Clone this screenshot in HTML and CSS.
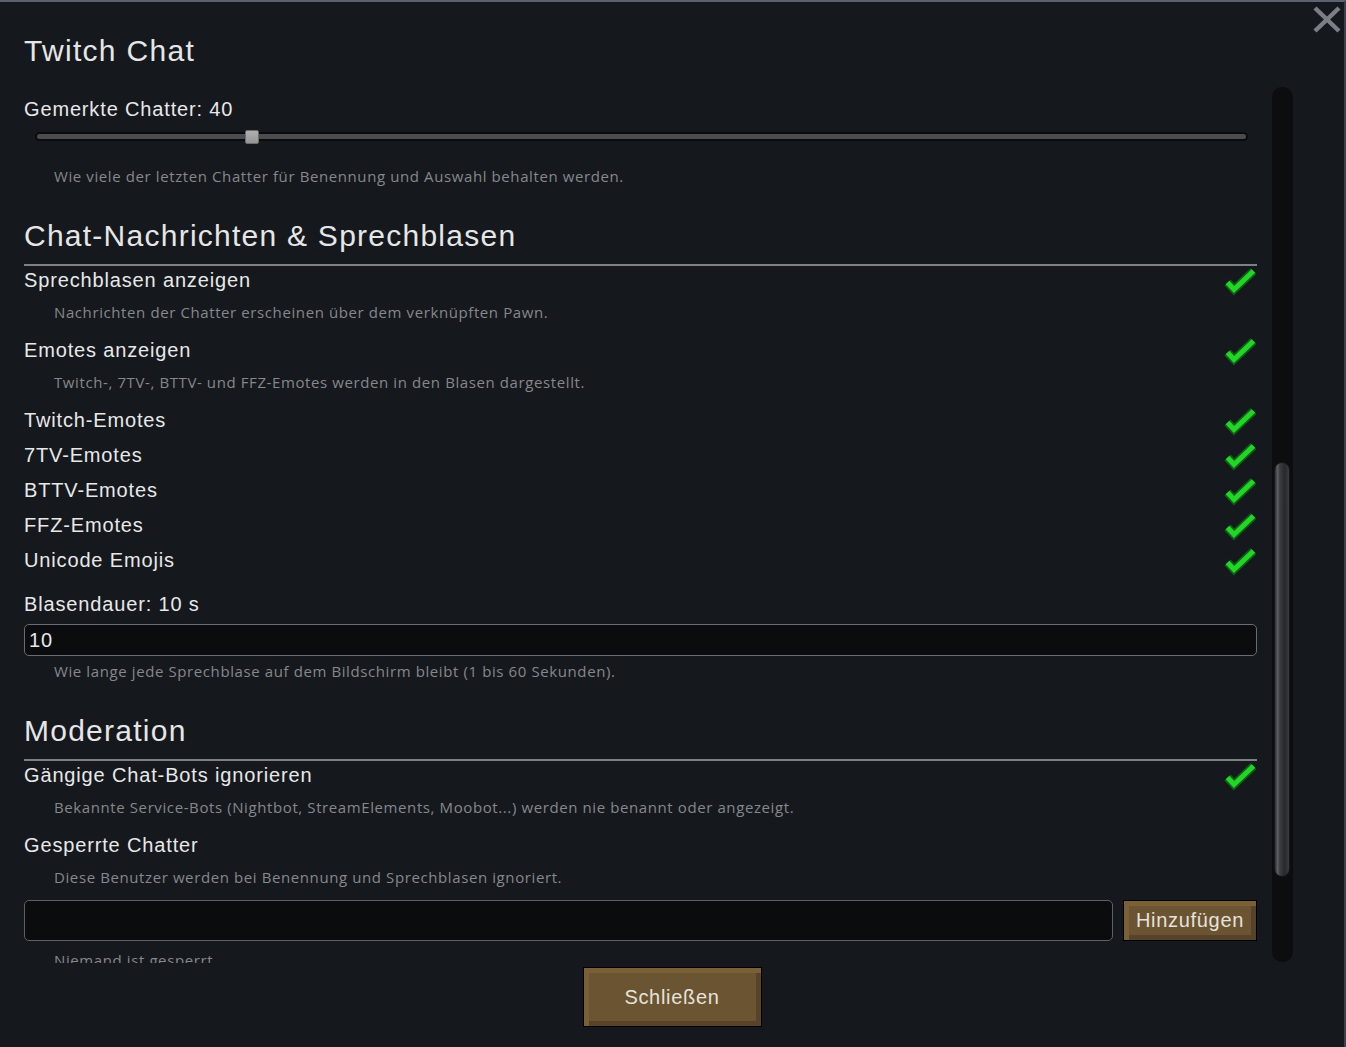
FILE: index.html
```html
<!DOCTYPE html>
<html lang="de">
<head>
<meta charset="utf-8">
<title>Twitch Chat</title>
<link rel="stylesheet" href="styles.css">
</head>
<body>
<div class="window">
  <button class="close-x" aria-label="Schließen">
    <svg width="28" height="27" viewBox="0 0 28 27"><path d="M2 2 L26 25 M26 2 L2 25" stroke="#7b7f85" stroke-width="4.5" fill="none"/></svg>
  </button>
  <h1 class="title">Twitch Chat</h1>
  <div class="main">
    <div class="viewport">
      <div class="content">
        <div class="label">Gemerkte Chatter: 40</div>
        <div class="slider">
          <div class="track"></div>
          <div class="thumb" style="left: calc(17.9% - 7px)"></div>
        </div>
        <div class="desc mt-19">Wie viele der letzten Chatter für Benennung und Auswahl behalten werden.</div>

        <h2 class="section-title">Chat-Nachrichten &amp; Sprechblasen</h2>
        <div class="rule"></div>
        <div class="toggle mt-2"><span class="label">Sprechblasen anzeigen</span><svg class="check" viewBox="0 0 34 30"><path class="ck-o" d="M4.5 15.5 L11 22.5 L30.5 4"/><path class="ck-i" d="M4.5 15.5 L11 22.5 L30.5 4"/></svg></div>
        <div class="desc mt-4">Nachrichten der Chatter erscheinen über dem verknüpften Pawn.</div>
        <div class="toggle mt-16"><span class="label">Emotes anzeigen</span><svg class="check" viewBox="0 0 34 30"><path class="ck-o" d="M4.5 15.5 L11 22.5 L30.5 4"/><path class="ck-i" d="M4.5 15.5 L11 22.5 L30.5 4"/></svg></div>
        <div class="desc mt-4">Twitch-, 7TV-, BTTV- und FFZ-Emotes werden in den Blasen dargestellt.</div>
        <div class="toggle mt-16"><span class="label">Twitch-Emotes</span><svg class="check" viewBox="0 0 34 30"><path class="ck-o" d="M4.5 15.5 L11 22.5 L30.5 4"/><path class="ck-i" d="M4.5 15.5 L11 22.5 L30.5 4"/></svg></div>
        <div class="toggle mt-5"><span class="label">7TV-Emotes</span><svg class="check" viewBox="0 0 34 30"><path class="ck-o" d="M4.5 15.5 L11 22.5 L30.5 4"/><path class="ck-i" d="M4.5 15.5 L11 22.5 L30.5 4"/></svg></div>
        <div class="toggle mt-5"><span class="label">BTTV-Emotes</span><svg class="check" viewBox="0 0 34 30"><path class="ck-o" d="M4.5 15.5 L11 22.5 L30.5 4"/><path class="ck-i" d="M4.5 15.5 L11 22.5 L30.5 4"/></svg></div>
        <div class="toggle mt-5"><span class="label">FFZ-Emotes</span><svg class="check" viewBox="0 0 34 30"><path class="ck-o" d="M4.5 15.5 L11 22.5 L30.5 4"/><path class="ck-i" d="M4.5 15.5 L11 22.5 L30.5 4"/></svg></div>
        <div class="toggle mt-5"><span class="label">Unicode Emojis</span><svg class="check" viewBox="0 0 34 30"><path class="ck-o" d="M4.5 15.5 L11 22.5 L30.5 4"/><path class="ck-i" d="M4.5 15.5 L11 22.5 L30.5 4"/></svg></div>
        <div class="label mt-14">Blasendauer: 10 s</div>
        <div class="text-input mt-8">10</div>
        <div class="desc mt-5">Wie lange jede Sprechblase auf dem Bildschirm bleibt (1 bis 60 Sekunden).</div>

        <h2 class="section-title">Moderation</h2>
        <div class="rule"></div>
        <div class="toggle mt-2"><span class="label">Gängige Chat-Bots ignorieren</span><svg class="check" viewBox="0 0 34 30"><path class="ck-o" d="M4.5 15.5 L11 22.5 L30.5 4"/><path class="ck-i" d="M4.5 15.5 L11 22.5 L30.5 4"/></svg></div>
        <div class="desc mt-4">Bekannte Service-Bots (Nightbot, StreamElements, Moobot...) werden nie benannt oder angezeigt.</div>
        <div class="label mt-16">Gesperrte Chatter</div>
        <div class="desc mt-10">Diese Benutzer werden bei Benennung und Sprechblasen ignoriert.</div>
        <div class="input-row">
          <div class="text-input tall"></div>
          <button class="btn btn-add">Hinzufügen</button>
        </div>
        <div class="desc mt-9">Niemand ist gesperrt.</div>
      </div>
    </div>
    <div class="scrollbar"><div class="scroll-thumb"></div></div>
  </div>
  <div class="footer">
    <button class="btn btn-close">Schließen</button>
  </div>
</div>
</body>
</html>
```

FILE: styles.css
```css
* { box-sizing: border-box; }
html, body { margin: 0; padding: 0; }
body {
  background: #15181d;
  font-family: "Liberation Sans", Arial, sans-serif;
  color: #e6e6e6;
  letter-spacing: 0.85px;
  overflow: hidden;
}
.window {
  position: relative;
  width: 1346px;
  height: 1047px;
  border-top: 2px solid #5b6270;
  border-right: 2px solid #3c424c;
}
.close-x {
  position: absolute;
  top: 4px;
  right: 3px;
  width: 28px;
  height: 27px;
  padding: 0;
  border: 0;
  background: none;
  display: block;
}
.close-x svg { display: block; }
.title {
  margin: 0;
  padding: 31px 0 0 24px;
  font-size: 30px;
  font-weight: normal;
  line-height: 36px;
  letter-spacing: 1.3px;
}
.main {
  display: flex;
  gap: 15px;
  height: 876px;
  margin-top: 18px;
  padding-left: 24px;
}
.viewport {
  width: 1233px;
  height: 876px;
  overflow: hidden;
}
.content { padding-top: 10px; }
.label {
  font-size: 20px;
  line-height: 24px;
  color: #e8e8e8;
  letter-spacing: 0.85px;
}
.slider {
  position: relative;
  height: 20px;
  margin: 6px 9px 0 11px;
}
.track {
  position: relative;
  top: 5px;
  height: 9px;
  border-radius: 5px;
  background: #4a4c50;
  border: 2px solid #0a0b0c;
}
.thumb {
  position: absolute;
  top: 3px;
  width: 14px;
  height: 14px;
  border-radius: 2px;
  background: linear-gradient(#b0b0b0, #959595);
  border: 1px solid #6c6c6c;
}
.desc {
  font-family: "Open Sans", "Noto Sans", sans-serif;
  font-size: 15px;
  line-height: 20px;
  color: #85888c;
  padding-left: 30px;
  letter-spacing: 0.6px;
  white-space: nowrap;
}
.section-title {
  margin: 32px 0 0;
  font-size: 30px;
  font-weight: normal;
  line-height: 36px;
  color: #e6e6e6;
  letter-spacing: 1.25px;
}
.rule {
  height: 2px;
  margin-top: 10px;
  background: #7e8084;
}
.toggle {
  display: flex;
  justify-content: space-between;
  align-items: flex-start;
  height: 30px;
}
.check {
  width: 34px;
  height: 30px;
  margin-top: -1px;
  flex: none;
  overflow: visible;
}
.ck-o { fill: none; stroke: #0e5f12; stroke-width: 8.5; }
.ck-i { fill: none; stroke: #22d628; stroke-width: 5; }
.text-input {
  height: 32px;
  background: #0b0c0e;
  border: 1px solid #6a6c70;
  border-radius: 5px;
  font-size: 20px;
  line-height: 30px;
  padding-left: 4px;
  color: #e8e8e8;
}
.input-row {
  display: flex;
  gap: 10px;
  height: 41px;
  margin-top: 13px;
}
.text-input.tall {
  flex: 1;
  height: 41px;
  border-color: #5e6064;
}
.btn {
  font-family: "Liberation Sans", Arial, sans-serif;
  font-size: 20px;
  letter-spacing: 0.7px;
  color: #e6e2dc;
  background: #6b5431;
  border: 1px solid #000;
  box-shadow: inset 5px 5px 0 #7a5f37, inset -5px -5px 0 #56432a;
  padding: 0;
  cursor: pointer;
}
.btn-add { width: 134px; height: 41px; flex: none; }
.scrollbar {
  width: 21px;
  height: 875px;
  background: #0b0d0f;
  border-radius: 10px;
  padding-top: 375px;
}
.scroll-thumb {
  width: 16px;
  height: 415px;
  margin-left: 2px;
  border-radius: 8px;
  background: linear-gradient(to right, #2a2c2f 0%, #5b5e62 18%, #3a3c40 35%, #26282b 70%, #3a3c40 100%);
  border: 1px solid #17181a;
}
.footer {
  display: flex;
  justify-content: center;
  margin-top: 4px;
}
.btn-close { width: 179px; height: 60px; }
.mt-2 { margin-top: 2px; }
.mt-4 { margin-top: 4px; }
.mt-5 { margin-top: 5px; }
.mt-8 { margin-top: 8px; }
.mt-9 { margin-top: 9px; }
.mt-10 { margin-top: 10px; }
.mt-14 { margin-top: 14px; }
.mt-16 { margin-top: 16px; }
.mt-19 { margin-top: 19px; }
```
